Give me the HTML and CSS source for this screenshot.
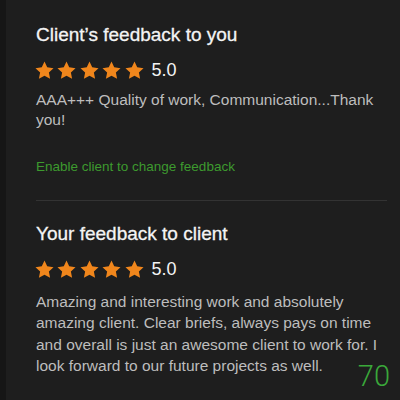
FILE: index.html
```html
<!DOCTYPE html>
<html lang="en">
<head>
    <meta charset="UTF-8">
    <meta name="viewport" content="width=device-width, initial-scale=1.0">
    <title>Feedback</title>
    <link rel="stylesheet" href="styles.css">
</head>
<body>
    <div class="page">
        <div class="panel">
            <div class="section">
                <h2 class="title">Client’s feedback to you</h2>
                <div class="rating">
                    <div class="stars">
                        <svg viewBox="0 0 24 24"><path d="M12 1.8l3.1 6.6 7.2.9-5.3 5 1.4 7.1L12 17.9l-6.4 3.5 1.4-7.1-5.3-5 7.2-.9z"/></svg>
                        <svg viewBox="0 0 24 24"><path d="M12 1.8l3.1 6.6 7.2.9-5.3 5 1.4 7.1L12 17.9l-6.4 3.5 1.4-7.1-5.3-5 7.2-.9z"/></svg>
                        <svg viewBox="0 0 24 24"><path d="M12 1.8l3.1 6.6 7.2.9-5.3 5 1.4 7.1L12 17.9l-6.4 3.5 1.4-7.1-5.3-5 7.2-.9z"/></svg>
                        <svg viewBox="0 0 24 24"><path d="M12 1.8l3.1 6.6 7.2.9-5.3 5 1.4 7.1L12 17.9l-6.4 3.5 1.4-7.1-5.3-5 7.2-.9z"/></svg>
                        <svg viewBox="0 0 24 24"><path d="M12 1.8l3.1 6.6 7.2.9-5.3 5 1.4 7.1L12 17.9l-6.4 3.5 1.4-7.1-5.3-5 7.2-.9z"/></svg>
                    </div>
                    <span class="score">5.0</span>
                </div>
                <p class="comment">AAA+++ Quality of work, Communication...Thank you!</p>
                <a class="action" href="#">Enable client to change feedback</a>
            </div>
            <div class="section">
                <h2 class="title">Your feedback to client</h2>
                <div class="rating">
                    <div class="stars">
                        <svg viewBox="0 0 24 24"><path d="M12 1.8l3.1 6.6 7.2.9-5.3 5 1.4 7.1L12 17.9l-6.4 3.5 1.4-7.1-5.3-5 7.2-.9z"/></svg>
                        <svg viewBox="0 0 24 24"><path d="M12 1.8l3.1 6.6 7.2.9-5.3 5 1.4 7.1L12 17.9l-6.4 3.5 1.4-7.1-5.3-5 7.2-.9z"/></svg>
                        <svg viewBox="0 0 24 24"><path d="M12 1.8l3.1 6.6 7.2.9-5.3 5 1.4 7.1L12 17.9l-6.4 3.5 1.4-7.1-5.3-5 7.2-.9z"/></svg>
                        <svg viewBox="0 0 24 24"><path d="M12 1.8l3.1 6.6 7.2.9-5.3 5 1.4 7.1L12 17.9l-6.4 3.5 1.4-7.1-5.3-5 7.2-.9z"/></svg>
                        <svg viewBox="0 0 24 24"><path d="M12 1.8l3.1 6.6 7.2.9-5.3 5 1.4 7.1L12 17.9l-6.4 3.5 1.4-7.1-5.3-5 7.2-.9z"/></svg>
                    </div>
                    <span class="score">5.0</span>
                </div>
                <p class="comment comment-long">Amazing and interesting work and absolutely amazing client. Clear briefs, always pays on time and overall is just an awesome client to work for. I look forward to our future projects as well.</p>
            </div>
        </div>
        <span class="counter">70</span>
    </div>
</body>
</html>
```

FILE: styles.css
```css
html, body {
    margin: 0;
    height: 100%;
    background-color: #161616;
}
body {
    font-family: "Liberation Sans", Arial, sans-serif;
}
.page {
    position: relative;
    height: 100%;
    padding-left: 6px;
    box-sizing: border-box;
}
.panel {
    height: 100%;
    background-color: #1e1e1e;
    padding: 23px 13px 0 30px;
    box-sizing: border-box;
}
.section {
    display: flex;
    flex-direction: column;
    align-items: flex-start;
}
.section + .section {
    border-top: 1px solid #333;
    padding-top: 21px;
}
.title {
    margin: 0;
    color: #f4f4f4;
    font-size: 19px;
    font-weight: 400;
    line-height: 24px;
    -webkit-text-stroke: 0.3px #f4f4f4;
}
.rating {
    display: flex;
    align-items: center;
    margin-top: 12.5px;
}
.stars {
    display: flex;
    gap: 1.4px;
    margin-left: -2px;
}
.stars svg {
    width: 21px;
    height: 21px;
    fill: #f0861c;
}
.score {
    margin-left: 7px;
    color: #f4f4f4;
    font-size: 18px;
}
.comment {
    margin: 9.5px 0 0;
    color: #bdbdbd;
    font-size: 15.5px;
    line-height: 20px;
}
.comment-long {
    margin-top: 11px;
    line-height: 21.6px;
}
.action {
    margin: 29px 0 25px;
    color: #3d9a2e;
    font-size: 13.5px;
    line-height: 16px;
    text-decoration: none;
}
.counter {
    position: absolute;
    right: 10px;
    bottom: 9px;
    color: #3aa83a;
    font-family: Roboto, "Liberation Sans", sans-serif;
    font-size: 29px;
    font-weight: 300;
    line-height: 1;
}
```
